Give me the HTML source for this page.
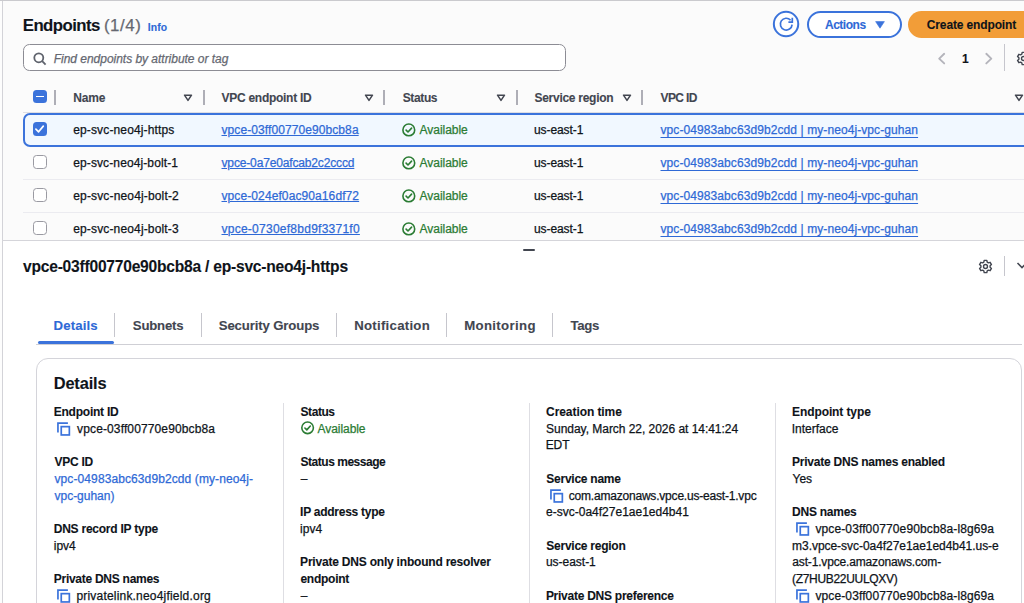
<!DOCTYPE html>
<html><head><meta charset="utf-8">
<style>
*{box-sizing:border-box;margin:0;padding:0}
html,body{width:1024px;height:603px;overflow:hidden;background:#fbfbfb;font-family:"Liberation Sans",sans-serif;color:#0f141a}
.a{position:absolute;white-space:nowrap}
</style></head><body>

<div class="a" style="left:0;top:0;width:1024px;height:1px;background:#cacace"></div>
<div class="a" style="left:0;top:1px;width:2px;height:602px;background:#fdfdfd"></div>
<div class="a" style="left:2px;top:1px;width:1px;height:602px;background:#d3d3d8"></div>

<svg class="a" style="left:772px;top:10px" width="28" height="28" viewBox="0 0 28 28"><circle cx="14.05" cy="14" r="12.2" fill="#fff" stroke="#3b73db" stroke-width="2"/><path d="M20.1 14.6 A5.9 5.9 0 1 1 18.6 10.2" fill="none" stroke="#3b73db" stroke-width="1.7"/><path d="M16.4 12.1 H20.3 V7.7" fill="none" stroke="#3b73db" stroke-width="1.7"/></svg>
<div class="a" style="left:807px;top:11px;width:95px;height:27px;border:2px solid #3b73db;border-radius:14px;background:#fff"></div>
<svg class="a" style="left:875px;top:20.5px" width="10" height="8" viewBox="0 0 10 8"><path d="M0.6 0.6 L9.4 0.6 L5 7.2 Z" fill="#3b73db" stroke="#3b73db" stroke-width="0.6" stroke-linejoin="round"/></svg>
<div class="a" style="left:908px;top:11px;width:130px;height:27px;border-radius:14px;background:#f29d38"></div>

<div class="a" style="left:23px;top:44px;width:543px;height:27px;border:1px solid #8c8c94;border-radius:6.5px;background:#fff"></div>
<svg class="a" style="left:33px;top:51.5px" width="14" height="14" viewBox="0 0 14 14"><circle cx="5.8" cy="5.8" r="4.5" fill="none" stroke="#5f636d" stroke-width="1.8"/><path d="M9.2 9.2 L12.6 12.6" stroke="#5f636d" stroke-width="1.8"/></svg>
<svg class="a" style="left:937px;top:51.5px" width="10" height="14" viewBox="0 0 10 14"><path d="M7.2 1.8 L2.2 6.6 L7.2 11.4" fill="none" stroke="#b4b4bb" stroke-width="1.9" stroke-linecap="round" stroke-linejoin="round"/></svg>
<svg class="a" style="left:984px;top:51.5px" width="10" height="14" viewBox="0 0 10 14"><path d="M2.3 1.8 L7.3 6.6 L2.3 11.4" fill="none" stroke="#b4b4bb" stroke-width="1.9" stroke-linecap="round" stroke-linejoin="round"/></svg>
<div class="a" style="left:1004px;top:44px;width:1px;height:27px;background:#c6c6cd"></div>
<svg class="a" style="left:1016px;top:50.5px" width="15" height="15" viewBox="0 0 16 16"><path d="M6.6 1.5h2.8l.4 1.9 1.3.75 1.85-.6 1.4 2.4-1.45 1.3v1.5l1.45 1.3-1.4 2.4-1.85-.6-1.3.75-.4 1.9H6.6l-.4-1.9-1.3-.75-1.85.6-1.4-2.4 1.45-1.3v-1.5L1.65 5.95l1.4-2.4 1.85.6 1.3-.75z" fill="none" stroke="#424650" stroke-width="1.5" stroke-linejoin="round"/><circle cx="8" cy="8" r="2.1" fill="none" stroke="#424650" stroke-width="1.5"/></svg>

<div class="a" style="left:33px;top:89.8px;width:13.6px;height:13.3px;border-radius:3.5px;background:#3b73db"></div>
<div class="a" style="left:35.8px;top:95.6px;width:8px;height:1.6px;background:#fff"></div>
<div class="a" style="left:54px;top:89.8px;width:2px;height:15px;background:#aeaeb6"></div>
<svg class="a" style="left:183.2px;top:93.5px" width="10" height="8" viewBox="0 0 10 8"><path d="M1.5 1.2 L8.5 1.2 L5 6.4 Z" fill="none" stroke="#424650" stroke-width="1.5" stroke-linejoin="round"/></svg>
<div class="a" style="left:203px;top:89.8px;width:2px;height:15px;background:#aeaeb6"></div>
<svg class="a" style="left:364.2px;top:93.5px" width="10" height="8" viewBox="0 0 10 8"><path d="M1.5 1.2 L8.5 1.2 L5 6.4 Z" fill="none" stroke="#424650" stroke-width="1.5" stroke-linejoin="round"/></svg>
<div class="a" style="left:383px;top:89.8px;width:2px;height:15px;background:#aeaeb6"></div>
<svg class="a" style="left:496.2px;top:93.5px" width="10" height="8" viewBox="0 0 10 8"><path d="M1.5 1.2 L8.5 1.2 L5 6.4 Z" fill="none" stroke="#424650" stroke-width="1.5" stroke-linejoin="round"/></svg>
<div class="a" style="left:516px;top:89.8px;width:2px;height:15px;background:#aeaeb6"></div>
<svg class="a" style="left:622.2px;top:93.5px" width="10" height="8" viewBox="0 0 10 8"><path d="M1.5 1.2 L8.5 1.2 L5 6.4 Z" fill="none" stroke="#424650" stroke-width="1.5" stroke-linejoin="round"/></svg>
<div class="a" style="left:641px;top:89.8px;width:2px;height:15px;background:#aeaeb6"></div>
<svg class="a" style="left:1013.5px;top:93.5px" width="10" height="8" viewBox="0 0 10 8"><path d="M1.5 1.2 L8.5 1.2 L5 6.4 Z" fill="none" stroke="#424650" stroke-width="1.5" stroke-linejoin="round"/></svg>
<div class="a" style="left:23px;top:112px;width:1001px;height:1px;background:#dedee3"></div>

<div class="a" style="left:23px;top:113px;width:1020px;height:34px;border:2px solid #3b73db;border-radius:7px;background:#f1f8ff"></div>
<div class="a" style="left:33.2px;top:122.2px;width:13.6px;height:13.5px;border-radius:3.5px;background:#3b73db"></div>
<svg class="a" style="left:33.2px;top:122.2px" width="14" height="14" viewBox="0 0 14 14"><path d="M2.9 7.1 L5.6 9.8 L10.3 4.1" fill="none" stroke="#fff" stroke-width="1.7" stroke-linecap="round" stroke-linejoin="round"/></svg>
<div class="a" style="left:33.2px;top:155.2px;width:13.6px;height:13.6px;border-radius:3.5px;border:1.3px solid #9a9aa2;background:#fff"></div>
<div class="a" style="left:33.2px;top:188.2px;width:13.6px;height:13.6px;border-radius:3.5px;border:1.3px solid #9a9aa2;background:#fff"></div>
<div class="a" style="left:33.2px;top:221.2px;width:13.6px;height:13.6px;border-radius:3.5px;border:1.3px solid #9a9aa2;background:#fff"></div>
<div class="a" style="left:23px;top:179px;width:1001px;height:1px;background:#ebebf0"></div>
<div class="a" style="left:23px;top:212px;width:1001px;height:1px;background:#ebebf0"></div>
<svg class="a" style="left:402px;top:123px" width="14" height="14" viewBox="0 0 14 14"><circle cx="6.8" cy="6.9" r="5.9" fill="none" stroke="#2b7c34" stroke-width="1.6"/><path d="M4.1 7.1 L6.0 9.0 L9.6 5.1" fill="none" stroke="#2b7c34" stroke-width="1.6" stroke-linecap="round" stroke-linejoin="round"/></svg>
<svg class="a" style="left:402px;top:156px" width="14" height="14" viewBox="0 0 14 14"><circle cx="6.8" cy="6.9" r="5.9" fill="none" stroke="#2b7c34" stroke-width="1.6"/><path d="M4.1 7.1 L6.0 9.0 L9.6 5.1" fill="none" stroke="#2b7c34" stroke-width="1.6" stroke-linecap="round" stroke-linejoin="round"/></svg>
<svg class="a" style="left:402px;top:189px" width="14" height="14" viewBox="0 0 14 14"><circle cx="6.8" cy="6.9" r="5.9" fill="none" stroke="#2b7c34" stroke-width="1.6"/><path d="M4.1 7.1 L6.0 9.0 L9.6 5.1" fill="none" stroke="#2b7c34" stroke-width="1.6" stroke-linecap="round" stroke-linejoin="round"/></svg>
<svg class="a" style="left:402px;top:222px" width="14" height="14" viewBox="0 0 14 14"><circle cx="6.8" cy="6.9" r="5.9" fill="none" stroke="#2b7c34" stroke-width="1.6"/><path d="M4.1 7.1 L6.0 9.0 L9.6 5.1" fill="none" stroke="#2b7c34" stroke-width="1.6" stroke-linecap="round" stroke-linejoin="round"/></svg>

<div class="a" style="left:3px;top:241px;width:1021px;height:362px;background:#fff"></div>
<div class="a" style="left:2px;top:240px;width:1022px;height:1px;background:#d5d5da"></div>
<div class="a" style="left:523px;top:248.5px;width:12px;height:2px;border-radius:1px;background:#424650"></div>
<svg class="a" style="left:978px;top:259px" width="15" height="15" viewBox="0 0 16 16"><path d="M6.6 1.5h2.8l.4 1.9 1.3.75 1.85-.6 1.4 2.4-1.45 1.3v1.5l1.45 1.3-1.4 2.4-1.85-.6-1.3.75-.4 1.9H6.6l-.4-1.9-1.3-.75-1.85.6-1.4-2.4 1.45-1.3v-1.5L1.65 5.95l1.4-2.4 1.85.6 1.3-.75z" fill="none" stroke="#424650" stroke-width="1.5" stroke-linejoin="round"/><circle cx="8" cy="8" r="2.1" fill="none" stroke="#424650" stroke-width="1.5"/></svg>
<div class="a" style="left:1004px;top:256px;width:1px;height:20px;background:#c6c6cd"></div>
<svg class="a" style="left:1016px;top:260px" width="12" height="10" viewBox="0 0 12 10"><path d="M1.5 3 L6 7.5 L10.5 3" fill="none" stroke="#424650" stroke-width="1.6"/></svg>

<div class="a" style="left:114px;top:313px;width:1px;height:24px;background:#c6c6cd"></div>
<div class="a" style="left:201px;top:313px;width:1px;height:24px;background:#c6c6cd"></div>
<div class="a" style="left:336px;top:313px;width:1px;height:24px;background:#c6c6cd"></div>
<div class="a" style="left:446px;top:313px;width:1px;height:24px;background:#c6c6cd"></div>
<div class="a" style="left:552px;top:313px;width:1px;height:24px;background:#c6c6cd"></div>
<div class="a" style="left:36px;top:344px;width:986px;height:1px;background:#cfcfd5"></div>
<div class="a" style="left:38px;top:341px;width:76px;height:3px;border-radius:1.5px;background:#3b73db"></div>

<div class="a" style="left:36px;top:358px;width:986px;height:300px;border:1.5px solid #d4d4da;border-radius:12px;background:#fff"></div>
<div class="a" style="left:283px;top:403px;width:1px;height:200px;background:#dedee3"></div>
<div class="a" style="left:529px;top:403px;width:1px;height:200px;background:#dedee3"></div>
<div class="a" style="left:775px;top:403px;width:1px;height:200px;background:#dedee3"></div>

<svg class="a" style="left:57.40px;top:421.50px" width="14" height="14" viewBox="0 0 14 14"><path d="M0.95 10.5 V1.1 H10.9" fill="none" stroke="#3b73db" stroke-width="1.7"/><rect x="4.25" y="4.65" width="8.1" height="8.3" fill="none" stroke="#3b73db" stroke-width="1.7"/></svg>
<svg class="a" style="left:57.40px;top:588.50px" width="14" height="14" viewBox="0 0 14 14"><path d="M0.95 10.5 V1.1 H10.9" fill="none" stroke="#3b73db" stroke-width="1.7"/><rect x="4.25" y="4.65" width="8.1" height="8.3" fill="none" stroke="#3b73db" stroke-width="1.7"/></svg>
<svg class="a" style="left:300.80px;top:421.00px" width="14" height="14" viewBox="0 0 14 14"><circle cx="6.6" cy="6.8" r="5.8" fill="none" stroke="#2b7c34" stroke-width="1.6"/><path d="M3.9 7.0 L5.8 8.9 L9.3 5.0" fill="none" stroke="#2b7c34" stroke-width="1.6" stroke-linecap="round" stroke-linejoin="round"/></svg>
<svg class="a" style="left:549.50px;top:488.50px" width="14" height="14" viewBox="0 0 14 14"><path d="M0.95 10.5 V1.1 H10.9" fill="none" stroke="#3b73db" stroke-width="1.7"/><rect x="4.25" y="4.65" width="8.1" height="8.3" fill="none" stroke="#3b73db" stroke-width="1.7"/></svg>
<svg class="a" style="left:795.70px;top:521.50px" width="14" height="14" viewBox="0 0 14 14"><path d="M0.95 10.5 V1.1 H10.9" fill="none" stroke="#3b73db" stroke-width="1.7"/><rect x="4.25" y="4.65" width="8.1" height="8.3" fill="none" stroke="#3b73db" stroke-width="1.7"/></svg>
<svg class="a" style="left:795.70px;top:588.50px" width="14" height="14" viewBox="0 0 14 14"><path d="M0.95 10.5 V1.1 H10.9" fill="none" stroke="#3b73db" stroke-width="1.7"/><rect x="4.25" y="4.65" width="8.1" height="8.3" fill="none" stroke="#3b73db" stroke-width="1.7"/></svg>
<div class="a t" style="left:22.79px;top:15.01px;font-size:16.8px;line-height:21px;letter-spacing:-0.563px;color:#0f141a;font-weight:bold;-webkit-text-stroke:0.1px #0f141a">Endpoints</div>
<div class="a t" style="left:103.89px;top:15.01px;font-size:16.8px;line-height:21px;letter-spacing:0.614px;color:#656871;-webkit-text-stroke:0.25px #656871">(1/4)</div>
<div class="a t" style="left:147.63px;top:21.01px;font-size:10.4px;line-height:13px;letter-spacing:0.146px;color:#2e69d6;font-weight:bold;-webkit-text-stroke:0.1px #2e69d6">Info</div>
<div class="a t" style="left:53.74px;top:52.01px;font-size:12px;line-height:15px;letter-spacing:-0.024px;color:#656871;font-style:italic;-webkit-text-stroke:0.25px #656871">Find endpoints by attribute or tag</div>
<div class="a t" style="left:824.96px;top:18.01px;font-size:12px;line-height:15px;letter-spacing:-0.472px;color:#2e69d6;font-weight:bold;-webkit-text-stroke:0.1px #2e69d6">Actions</div>
<div class="a t" style="left:926.82px;top:18.01px;font-size:12px;line-height:15px;letter-spacing:-0.138px;color:#0f141a;font-weight:bold;-webkit-text-stroke:0.1px #0f141a">Create endpoint</div>
<div class="a t" style="left:962.08px;top:52.01px;font-size:12px;line-height:15px;letter-spacing:-0.330px;color:#0f141a;font-weight:bold;-webkit-text-stroke:0.1px #0f141a">1</div>
<div class="a t" style="left:73.18px;top:91.01px;font-size:12px;line-height:15px;letter-spacing:-0.150px;color:#424650;font-weight:bold;-webkit-text-stroke:0.1px #424650">Name</div>
<div class="a t" style="left:221.50px;top:91.01px;font-size:12px;line-height:15px;letter-spacing:-0.272px;color:#424650;font-weight:bold;-webkit-text-stroke:0.1px #424650">VPC endpoint ID</div>
<div class="a t" style="left:402.66px;top:91.01px;font-size:12px;line-height:15px;letter-spacing:-0.360px;color:#424650;font-weight:bold;-webkit-text-stroke:0.1px #424650">Status</div>
<div class="a t" style="left:534.46px;top:91.01px;font-size:12px;line-height:15px;letter-spacing:-0.272px;color:#424650;font-weight:bold;-webkit-text-stroke:0.1px #424650">Service region</div>
<div class="a t" style="left:660.60px;top:91.01px;font-size:12px;line-height:15px;letter-spacing:-0.644px;color:#424650;font-weight:bold;-webkit-text-stroke:0.1px #424650">VPC ID</div>
<div class="a t" style="left:73.22px;top:123.01px;font-size:12px;line-height:15px;letter-spacing:0.137px;color:#0f141a;-webkit-text-stroke:0.25px #0f141a">ep-svc-neo4j-https</div>
<div class="a t" style="left:221.50px;top:123.01px;font-size:12px;line-height:15px;letter-spacing:0.087px;color:#2e69d6;text-decoration:underline;text-decoration-thickness:1px;text-underline-offset:1px;-webkit-text-stroke:0.25px #2e69d6">vpce-03ff00770e90bcb8a</div>
<div class="a t" style="left:419.60px;top:123.01px;font-size:12px;line-height:15px;letter-spacing:-0.043px;color:#2b7c34;-webkit-text-stroke:0.25px #2b7c34">Available</div>
<div class="a t" style="left:533.98px;top:123.01px;font-size:12px;line-height:15px;letter-spacing:-0.081px;color:#0f141a;-webkit-text-stroke:0.25px #0f141a">us-east-1</div>
<div class="a t" style="left:660.50px;top:123.01px;font-size:12px;line-height:15px;letter-spacing:0.086px;color:#2e69d6;text-decoration:underline;text-decoration-thickness:1px;text-underline-offset:3px;-webkit-text-stroke:0.25px #2e69d6">vpc-04983abc63d9b2cdd | my-neo4j-vpc-guhan</div>
<div class="a t" style="left:73.22px;top:156.01px;font-size:12px;line-height:15px;letter-spacing:0.112px;color:#0f141a;-webkit-text-stroke:0.25px #0f141a">ep-svc-neo4j-bolt-1</div>
<div class="a t" style="left:221.50px;top:156.01px;font-size:12px;line-height:15px;letter-spacing:-0.148px;color:#2e69d6;text-decoration:underline;text-decoration-thickness:1px;text-underline-offset:1px;-webkit-text-stroke:0.25px #2e69d6">vpce-0a7e0afcab2c2cccd</div>
<div class="a t" style="left:419.60px;top:156.01px;font-size:12px;line-height:15px;letter-spacing:-0.043px;color:#2b7c34;-webkit-text-stroke:0.25px #2b7c34">Available</div>
<div class="a t" style="left:533.98px;top:156.01px;font-size:12px;line-height:15px;letter-spacing:-0.081px;color:#0f141a;-webkit-text-stroke:0.25px #0f141a">us-east-1</div>
<div class="a t" style="left:660.50px;top:156.01px;font-size:12px;line-height:15px;letter-spacing:0.086px;color:#2e69d6;text-decoration:underline;text-decoration-thickness:1px;text-underline-offset:3px;-webkit-text-stroke:0.25px #2e69d6">vpc-04983abc63d9b2cdd | my-neo4j-vpc-guhan</div>
<div class="a t" style="left:73.22px;top:189.01px;font-size:12px;line-height:15px;letter-spacing:0.157px;color:#0f141a;-webkit-text-stroke:0.25px #0f141a">ep-svc-neo4j-bolt-2</div>
<div class="a t" style="left:221.50px;top:189.01px;font-size:12px;line-height:15px;letter-spacing:0.100px;color:#2e69d6;text-decoration:underline;text-decoration-thickness:1px;text-underline-offset:1px;-webkit-text-stroke:0.25px #2e69d6">vpce-024ef0ac90a16df72</div>
<div class="a t" style="left:419.60px;top:189.01px;font-size:12px;line-height:15px;letter-spacing:-0.043px;color:#2b7c34;-webkit-text-stroke:0.25px #2b7c34">Available</div>
<div class="a t" style="left:533.98px;top:189.01px;font-size:12px;line-height:15px;letter-spacing:-0.081px;color:#0f141a;-webkit-text-stroke:0.25px #0f141a">us-east-1</div>
<div class="a t" style="left:660.50px;top:189.01px;font-size:12px;line-height:15px;letter-spacing:0.086px;color:#2e69d6;text-decoration:underline;text-decoration-thickness:1px;text-underline-offset:3px;-webkit-text-stroke:0.25px #2e69d6">vpc-04983abc63d9b2cdd | my-neo4j-vpc-guhan</div>
<div class="a t" style="left:73.22px;top:222.01px;font-size:12px;line-height:15px;letter-spacing:0.150px;color:#0f141a;-webkit-text-stroke:0.25px #0f141a">ep-svc-neo4j-bolt-3</div>
<div class="a t" style="left:221.50px;top:222.01px;font-size:12px;line-height:15px;letter-spacing:0.255px;color:#2e69d6;text-decoration:underline;text-decoration-thickness:1px;text-underline-offset:1px;-webkit-text-stroke:0.25px #2e69d6">vpce-0730ef8bd9f3371f0</div>
<div class="a t" style="left:419.60px;top:222.01px;font-size:12px;line-height:15px;letter-spacing:-0.043px;color:#2b7c34;-webkit-text-stroke:0.25px #2b7c34">Available</div>
<div class="a t" style="left:533.98px;top:222.01px;font-size:12px;line-height:15px;letter-spacing:-0.081px;color:#0f141a;-webkit-text-stroke:0.25px #0f141a">us-east-1</div>
<div class="a t" style="left:660.50px;top:222.01px;font-size:12px;line-height:15px;letter-spacing:0.086px;color:#2e69d6;text-decoration:underline;text-decoration-thickness:1px;text-underline-offset:3px;-webkit-text-stroke:0.25px #2e69d6">vpc-04983abc63d9b2cdd | my-neo4j-vpc-guhan</div>
<div class="a t" style="left:23.00px;top:257.00px;font-size:15.6px;line-height:20px;letter-spacing:-0.226px;color:#0f141a;font-weight:bold;-webkit-text-stroke:0.1px #0f141a">vpce-03ff00770e90bcb8a / ep-svc-neo4j-https</div>
<div class="a t" style="left:53.61px;top:318.00px;font-size:13.2px;line-height:16px;letter-spacing:0.130px;color:#2e69d6;font-weight:bold;-webkit-text-stroke:0.1px #2e69d6">Details</div>
<div class="a t" style="left:132.84px;top:318.00px;font-size:13.2px;line-height:16px;letter-spacing:-0.222px;color:#424650;font-weight:bold;-webkit-text-stroke:0.1px #424650">Subnets</div>
<div class="a t" style="left:218.74px;top:318.00px;font-size:13.2px;line-height:16px;letter-spacing:-0.139px;color:#424650;font-weight:bold;-webkit-text-stroke:0.1px #424650">Security Groups</div>
<div class="a t" style="left:354.21px;top:318.00px;font-size:13.2px;line-height:16px;letter-spacing:0.273px;color:#424650;font-weight:bold;-webkit-text-stroke:0.1px #424650">Notification</div>
<div class="a t" style="left:464.21px;top:318.00px;font-size:13.2px;line-height:16px;letter-spacing:0.346px;color:#424650;font-weight:bold;-webkit-text-stroke:0.1px #424650">Monitoring</div>
<div class="a t" style="left:570.47px;top:318.00px;font-size:13.2px;line-height:16px;letter-spacing:-0.340px;color:#424650;font-weight:bold;-webkit-text-stroke:0.1px #424650">Tags</div>
<div class="a t" style="left:53.72px;top:373.00px;font-size:16.4px;line-height:20px;letter-spacing:-0.151px;color:#0f141a;font-weight:bold;-webkit-text-stroke:0.1px #0f141a">Details</div>
<div class="a t" style="left:53.78px;top:405.01px;font-size:12px;line-height:15px;letter-spacing:-0.241px;color:#0f141a;font-weight:bold;-webkit-text-stroke:0.1px #0f141a">Endpoint ID</div>
<div class="a t" style="left:77.10px;top:422.01px;font-size:12px;line-height:15px;letter-spacing:0.125px;color:#0f141a;-webkit-text-stroke:0.25px #0f141a">vpce-03ff00770e90bcb8a</div>
<div class="a t" style="left:54.50px;top:455.01px;font-size:12px;line-height:15px;letter-spacing:-0.255px;color:#0f141a;font-weight:bold;-webkit-text-stroke:0.1px #0f141a">VPC ID</div>
<div class="a t" style="left:54.50px;top:472.01px;font-size:12px;line-height:15px;letter-spacing:0.099px;color:#2e69d6;-webkit-text-stroke:0.25px #2e69d6">vpc-04983abc63d9b2cdd (my-neo4j-</div>
<div class="a t" style="left:54.50px;top:489.01px;font-size:12px;line-height:15px;letter-spacing:-0.014px;color:#2e69d6;-webkit-text-stroke:0.25px #2e69d6">vpc-guhan)</div>
<div class="a t" style="left:53.78px;top:522.01px;font-size:12px;line-height:15px;letter-spacing:-0.239px;color:#0f141a;font-weight:bold;-webkit-text-stroke:0.1px #0f141a">DNS record IP type</div>
<div class="a t" style="left:53.78px;top:539.01px;font-size:12px;line-height:15px;letter-spacing:-0.014px;color:#0f141a;-webkit-text-stroke:0.25px #0f141a">ipv4</div>
<div class="a t" style="left:53.78px;top:572.01px;font-size:12px;line-height:15px;letter-spacing:-0.269px;color:#0f141a;font-weight:bold;-webkit-text-stroke:0.1px #0f141a">Private DNS names</div>
<div class="a t" style="left:76.38px;top:589.01px;font-size:12px;line-height:15px;letter-spacing:0.199px;color:#0f141a;-webkit-text-stroke:0.25px #0f141a">privatelink.neo4jfield.org</div>
<div class="a t" style="left:300.56px;top:405.01px;font-size:12px;line-height:15px;letter-spacing:-0.440px;color:#0f141a;font-weight:bold;-webkit-text-stroke:0.1px #0f141a">Status</div>
<div class="a t" style="left:317.60px;top:422.01px;font-size:12px;line-height:15px;letter-spacing:-0.068px;color:#2b7c34;-webkit-text-stroke:0.25px #2b7c34">Available</div>
<div class="a t" style="left:300.56px;top:455.01px;font-size:12px;line-height:15px;letter-spacing:-0.479px;color:#0f141a;font-weight:bold;-webkit-text-stroke:0.1px #0f141a">Status message</div>
<div class="a t" style="left:300.80px;top:472.01px;font-size:12px;line-height:15px;letter-spacing:-0.014px;color:#0f141a;-webkit-text-stroke:0.25px #0f141a">–</div>
<div class="a t" style="left:300.08px;top:505.01px;font-size:12px;line-height:15px;letter-spacing:-0.255px;color:#0f141a;font-weight:bold;-webkit-text-stroke:0.1px #0f141a">IP address type</div>
<div class="a t" style="left:300.08px;top:522.01px;font-size:12px;line-height:15px;letter-spacing:-0.014px;color:#0f141a;-webkit-text-stroke:0.25px #0f141a">ipv4</div>
<div class="a t" style="left:300.08px;top:555.01px;font-size:12px;line-height:15px;letter-spacing:-0.205px;color:#0f141a;font-weight:bold;-webkit-text-stroke:0.1px #0f141a">Private DNS only inbound resolver</div>
<div class="a t" style="left:300.44px;top:572.01px;font-size:12px;line-height:15px;letter-spacing:-0.255px;color:#0f141a;font-weight:bold;-webkit-text-stroke:0.1px #0f141a">endpoint</div>
<div class="a t" style="left:300.80px;top:589.01px;font-size:12px;line-height:15px;letter-spacing:-0.014px;color:#0f141a;-webkit-text-stroke:0.25px #0f141a">–</div>
<div class="a t" style="left:546.12px;top:405.01px;font-size:12px;line-height:15px;letter-spacing:-0.082px;color:#0f141a;font-weight:bold;-webkit-text-stroke:0.1px #0f141a">Creation time</div>
<div class="a t" style="left:546.12px;top:422.01px;font-size:12px;line-height:15px;letter-spacing:-0.038px;color:#0f141a;-webkit-text-stroke:0.25px #0f141a">Sunday, March 22, 2026 at 14:41:24</div>
<div class="a t" style="left:545.64px;top:438.01px;font-size:12px;line-height:15px;letter-spacing:-0.014px;color:#0f141a;-webkit-text-stroke:0.25px #0f141a">EDT</div>
<div class="a t" style="left:546.36px;top:472.01px;font-size:12px;line-height:15px;letter-spacing:-0.255px;color:#0f141a;font-weight:bold;-webkit-text-stroke:0.1px #0f141a">Service name</div>
<div class="a t" style="left:568.72px;top:489.01px;font-size:12px;line-height:15px;letter-spacing:-0.199px;color:#0f141a;-webkit-text-stroke:0.25px #0f141a">com.amazonaws.vpce.us-east-1.vpc</div>
<div class="a t" style="left:546.12px;top:505.01px;font-size:12px;line-height:15px;letter-spacing:-0.002px;color:#0f141a;-webkit-text-stroke:0.25px #0f141a">e-svc-0a4f27e1ae1ed4b41</div>
<div class="a t" style="left:546.36px;top:539.01px;font-size:12px;line-height:15px;letter-spacing:-0.255px;color:#0f141a;font-weight:bold;-webkit-text-stroke:0.1px #0f141a">Service region</div>
<div class="a t" style="left:545.88px;top:555.01px;font-size:12px;line-height:15px;letter-spacing:-0.014px;color:#0f141a;-webkit-text-stroke:0.25px #0f141a">us-east-1</div>
<div class="a t" style="left:545.88px;top:589.01px;font-size:12px;line-height:15px;letter-spacing:-0.255px;color:#0f141a;font-weight:bold;-webkit-text-stroke:0.1px #0f141a">Private DNS preference</div>
<div class="a t" style="left:792.08px;top:405.01px;font-size:12px;line-height:15px;letter-spacing:-0.105px;color:#0f141a;font-weight:bold;-webkit-text-stroke:0.1px #0f141a">Endpoint type</div>
<div class="a t" style="left:791.72px;top:422.01px;font-size:12px;line-height:15px;letter-spacing:-0.014px;color:#0f141a;-webkit-text-stroke:0.25px #0f141a">Interface</div>
<div class="a t" style="left:792.08px;top:455.01px;font-size:12px;line-height:15px;letter-spacing:-0.237px;color:#0f141a;font-weight:bold;-webkit-text-stroke:0.1px #0f141a">Private DNS names enabled</div>
<div class="a t" style="left:792.56px;top:472.01px;font-size:12px;line-height:15px;letter-spacing:-0.014px;color:#0f141a;-webkit-text-stroke:0.25px #0f141a">Yes</div>
<div class="a t" style="left:792.08px;top:505.01px;font-size:12px;line-height:15px;letter-spacing:-0.255px;color:#0f141a;font-weight:bold;-webkit-text-stroke:0.1px #0f141a">DNS names</div>
<div class="a t" style="left:815.40px;top:522.01px;font-size:12px;line-height:15px;letter-spacing:0.121px;color:#0f141a;-webkit-text-stroke:0.25px #0f141a">vpce-03ff00770e90bcb8a-l8g69a</div>
<div class="a t" style="left:792.08px;top:539.01px;font-size:12px;line-height:15px;letter-spacing:-0.045px;color:#0f141a;-webkit-text-stroke:0.25px #0f141a">m3.vpce-svc-0a4f27e1ae1ed4b41.us-e</div>
<div class="a t" style="left:792.32px;top:555.01px;font-size:12px;line-height:15px;letter-spacing:-0.160px;color:#0f141a;-webkit-text-stroke:0.25px #0f141a">ast-1.vpce.amazonaws.com-</div>
<div class="a t" style="left:792.08px;top:572.01px;font-size:12px;line-height:15px;letter-spacing:-0.319px;color:#0f141a;-webkit-text-stroke:0.25px #0f141a">(Z7HUB22UULQXV)</div>
<div class="a t" style="left:815.40px;top:589.01px;font-size:12px;line-height:15px;letter-spacing:0.121px;color:#0f141a;-webkit-text-stroke:0.25px #0f141a">vpce-03ff00770e90bcb8a-l8g69a</div>
</body></html>
